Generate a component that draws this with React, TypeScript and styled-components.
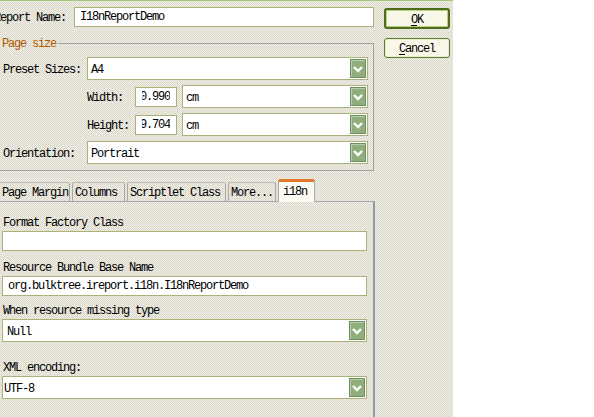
import React from 'react';
import styled, { createGlobalStyle } from 'styled-components';

const GlobalStyle = createGlobalStyle`
  html, body {
    margin: 0;
    padding: 0;
    background: #ffffff;
    overflow: hidden;
  }
  * {
    box-sizing: border-box;
  }
`;

const Screen = styled.div`
  display: flex;
  width: 594px;
  height: 417px;
  overflow: hidden;
  font-family: "Liberation Mono", "Noto Sans CJK SC", monospace;
  font-size: 12px;
  letter-spacing: -1.2px;
  color: #000;
`;

const Dialog = styled.div`
  display: flex;
  width: 453px;
  flex: none;
  height: 100%;
  border-top: 1px solid #a6c679;
  background-color: #e6e4da;
  background-image: repeating-conic-gradient(#dbd7d7 0 25%, #efefda 0 50%);
  background-size: 2px 2px;
`;

const Main = styled.div`
  width: 375px;
  flex: none;
  display: flex;
  flex-direction: column;
`;

const NameRow = styled.div`
  display: flex;
  align-items: center;
  height: 20px;
  margin-top: 6px;
  padding-right: 1px;
`;

const Label = styled.span<{ $width?: number; $shift?: number; $drop?: number }>`
  display: inline-block;
  flex: none;
  width: ${(p) => (p.$width ? `${p.$width}px` : 'auto')};
  margin-left: ${(p) => p.$shift ?? 0}px;
  padding-top: ${(p) => p.$drop ?? 3}px;
  white-space: nowrap;
  line-height: 14px;
`;

const TextBox = styled.div<{ $width?: number; $pad?: number }>`
  height: 20px;
  ${(p) => (p.$width ? `width: ${p.$width}px; flex: none;` : 'flex: 1;')}
  background: #ffffff;
  border: 1px solid #aab27a;
  padding-left: ${(p) => p.$pad ?? 5}px;
  padding-right: 4px;
  line-height: 19px;
  white-space: nowrap;
  overflow: hidden;
`;

const NumberBox = styled.div`
  width: 42px;
  height: 20px;
  flex: none;
  display: flex;
  background: #ffffff;
  border: 1px solid #aab27a;
  padding: 0 6px 0 6px;
  line-height: 19px;
`;

const NumberClip = styled.div`
  flex: 1;
  display: flex;
  justify-content: flex-end;
  overflow: hidden;
  white-space: nowrap;
`;

const ComboBox = styled.div<{ $pad?: number }>`
  flex: 1;
  height: 23px;
  display: flex;
  align-items: center;
  background: #ffffff;
  border: 1px solid #aab27a;
  padding: 1px 1px 1px ${(p) => p.$pad ?? 3}px;
`;

const ComboValue = styled.span`
  flex: 1;
  white-space: nowrap;
  line-height: 14px;
  padding-top: 3px;
`;

const DropButton = styled.span`
  width: 16px;
  height: 19px;
  flex: none;
  display: flex;
  align-items: center;
  justify-content: center;
  background: #8fae7b;
  border: 1px solid #6f8f60;
  box-shadow: inset 1px 1px 0 #b6ccaa;
`;

const Chevron = () => (
  <svg width="10" height="8" viewBox="0 0 10 8">
    <path d="M1 2 L5 6 L9 2" stroke="#ffffff" strokeWidth="2.4" fill="none" />
  </svg>
);

const Combo: React.FC<{ value: string; pad?: number }> = ({ value, pad }) => (
  <ComboBox $pad={pad}>
    <ComboValue>{value}</ComboValue>
    <DropButton>
      <Chevron />
    </DropButton>
  </ComboBox>
);

const GroupBox = styled.fieldset`
  margin: 9px 0 0 -6px;
  padding: 6px 5px 6px 8px;
  border: 1px solid #a2a2a2;
  width: 380px;
  display: flex;
  flex-direction: column;
  gap: 5px;
`;

const Legend = styled.legend`
  margin-left: -8px;
  padding: 1px 2px 0 7px;
  color: #b25a00;
  line-height: 14px;
`;

const FormRow = styled.div<{ $indent?: number }>`
  display: flex;
  align-items: center;
  gap: 5px;
  padding-left: ${(p) => p.$indent ?? 0}px;
`;

const TabStrip = styled.div`
  display: flex;
  align-items: flex-end;
  gap: 2px;
  margin-top: 8px;
  height: 22px;
`;

const Tab = styled.div<{ $active?: boolean; $width: number }>`
  width: ${(p) => p.$width}px;
  height: ${(p) => (p.$active ? 23 : 19)}px;
  border: 1px solid #a8a8a8;
  border-bottom: none;
  border-top: ${(p) => (p.$active ? '3px solid #e2782c' : '1px solid #b8b8b8')};
  border-radius: 2px 2px 0 0;
  padding: ${(p) => (p.$active ? '3px 0 0 4px' : '3px 0 0 2px')};
  line-height: 14px;
  white-space: nowrap;
  overflow: hidden;
  background: ${(p) => (p.$active ? '#fbfbf4' : 'transparent')};
  margin-bottom: ${(p) => (p.$active ? '-1px' : '0')};
  position: relative;
  z-index: ${(p) => (p.$active ? 1 : 0)};
`;

const FirstTab = styled(Tab)`
  margin-left: -3px;
  padding-left: 4px;
`;

const TabPanel = styled.div`
  flex: 1;
  border-top: 1px solid #a4a8ac;
  border-right: 2px solid #8c9aa6;
  padding: 12px 6px 0 2px;
  display: flex;
  flex-direction: column;
`;

const FieldLabel = styled.div<{ $gap: number }>`
  margin-top: ${(p) => p.$gap}px;
  margin-left: 1px;
  height: 16px;
  padding-top: 2px;
  line-height: 14px;
  margin-bottom: 1px;
  white-space: nowrap;
`;

const FieldRow = styled.div`
  display: flex;
`;

const ButtonColumn = styled.div`
  display: flex;
  flex-direction: column;
  gap: 9px;
  padding: 7px 0 0 9px;
`;

const DialogButton = styled.button<{ $default?: boolean }>`
  width: 66px;
  height: ${(p) => (p.$default ? 21 : 20)}px;
  font: inherit;
  color: #000;
  letter-spacing: -1.2px;
  border-radius: 3px;
  border: ${(p) => (p.$default ? '2px solid #4f6b1d' : '1px solid #5d7628')};
  box-shadow: inset 0 0 0 1px ${(p) => (p.$default ? '#b6d27e' : '#e6efcf')};
  background-color: #fbfbe8;
  background-image: repeating-conic-gradient(#f3f0dc 0 25%, #fefef4 0 50%);
  background-size: 2px 2px;
  padding: 2px 0 0;
  line-height: 14px;
  u {
    text-decoration: underline;
    text-underline-offset: 2px;
  }
`;

const Blank = styled.div`
  flex: 1;
  background: #ffffff;
`;

export default function App() {
  return (
    <>
      <GlobalStyle />
      <Screen>
        <Dialog>
          <Main>
            <NameRow>
              <Label $width={80} $shift={-6} $drop={1}>Report Name:</Label>
              <TextBox>I18nReportDemo</TextBox>
            </NameRow>

            <GroupBox>
              <Legend>Page size</Legend>
              <FormRow>
                <Label $width={79}>Preset Sizes:</Label>
                <Combo value="A4" />
              </FormRow>
              <FormRow $indent={84}>
                <Label $width={43}>Width:</Label>
                <NumberBox>
                  <NumberClip>
                    <span>20.990</span>
                  </NumberClip>
                </NumberBox>
                <Combo value="cm" />
              </FormRow>
              <FormRow $indent={84}>
                <Label $width={43}>Height:</Label>
                <NumberBox>
                  <NumberClip>
                    <span>29.704</span>
                  </NumberClip>
                </NumberBox>
                <Combo value="cm" />
              </FormRow>
              <FormRow>
                <Label $width={79}>Orientation:</Label>
                <Combo value="Portrait" />
              </FormRow>
            </GroupBox>

            <TabStrip>
              <FirstTab $width={73}>Page Margin</FirstTab>
              <Tab $width={53}>Columns</Tab>
              <Tab $width={99}>Scriptlet Class</Tab>
              <Tab $width={48}>More...</Tab>
              <Tab $width={37} $active>i18n</Tab>
            </TabStrip>

            <TabPanel>
              <FieldLabel $gap={0}>Format Factory Class</FieldLabel>
              <FieldRow>
                <TextBox />
              </FieldRow>
              <FieldLabel $gap={8}>Resource Bundle Base Name</FieldLabel>
              <FieldRow>
                <TextBox>org.bulktree.ireport.i18n.I18nReportDemo</TextBox>
              </FieldRow>
              <FieldLabel $gap={6}>When resource missing type</FieldLabel>
              <FieldRow>
                <Combo value="Null" pad={4} />
              </FieldRow>
              <FieldLabel $gap={17}>XML encoding:</FieldLabel>
              <FieldRow>
                <Combo value="UTF-8" pad={1} />
              </FieldRow>
            </TabPanel>
          </Main>

          <ButtonColumn>
            <DialogButton $default>
              <u>O</u>K
            </DialogButton>
            <DialogButton>
              <u>C</u>ancel
            </DialogButton>
          </ButtonColumn>
        </Dialog>
        <Blank />
      </Screen>
    </>
  );
}
